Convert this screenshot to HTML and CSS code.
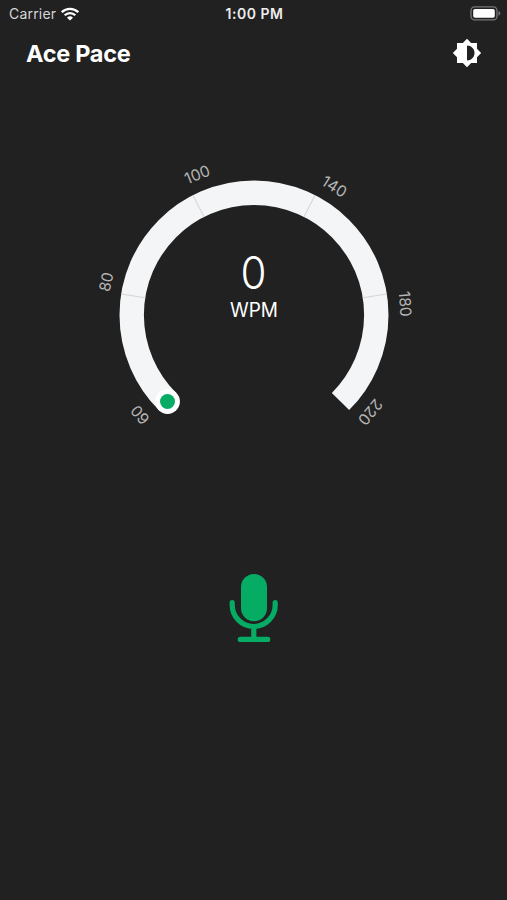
FILE: index.html
```html
<!DOCTYPE html>
<html lang="en">
<head>
<meta charset="utf-8">
<title>Ace Pace</title>
<link rel="stylesheet" href="styles.css">
</head>
<body>
<div class="screen">
  <div class="status">
    <div class="carrier"><span class="carrier-name">Carrier</span>
      <svg class="wifi" viewBox="0 0 18 14" width="18" height="14"><g fill="none" stroke="#fff" stroke-width="2.3"><path d="M.8 5.2a11.6 11.6 0 0 1 16.4 0"/><path d="M3.7 8.3a7.5 7.5 0 0 1 10.6 0"/></g><path fill="#fff" d="M9 13.6 6 10.7a4.3 4.3 0 0 1 6 0z"/></svg>
    </div>
    <div class="time">1:00 PM</div>
    <svg class="battery" viewBox="0 0 31 15" width="31" height="15"><rect x="1" y=".9" width="26" height="13" rx="3.6" fill="none" stroke="#77777a" stroke-width="1.3"/><rect x="3.2" y="3" width="21.6" height="8.8" rx="1.8" fill="#fff"/><path d="M28.5 5c2.4 1 2.4 3.8 0 4.8z" fill="#77777a"/></svg>
  </div>
  <header class="header">
    <h1 class="title">Ace Pace</h1>
    <svg class="theme" viewBox="0 0 24 24" width="30" height="30"><path fill="#fff" d="M20 15.31 23.31 12 20 8.69V4h-4.69L12 .69 8.69 4H4v4.69L.69 12 4 15.31V20h4.69L12 23.31 15.31 20H20z"/><path fill="#212121" d="M12 6v12c3.31 0 6-2.69 6-6s-2.69-6-6-6z"/></svg>
  </header>
  <main class="main">
    <svg class="gauge" viewBox="0 0 340 300" width="340" height="300">
      <g transform="translate(170 165)">
        <path d="M-86.5 86.5A122.3 122.3 0 1 1 86.5 86.5" fill="none" stroke="#f3f5f7" stroke-width="24.4"/>
        <g stroke="#d3d5d8" stroke-width="1">
          <path d="M0-134.5V-110" transform="rotate(-81)"/><path d="M0-134.5V-110" transform="rotate(-27)"/><path d="M0-134.5V-110" transform="rotate(27)"/><path d="M0-134.5V-110" transform="rotate(81)"/>
        </g>
        <circle cx="-86.5" cy="86.5" r="12.4" fill="#fff"/><circle cx="-86.5" cy="86.5" r="7.5" fill="#06ab64"/>
        <g class="ticks">
          <text y="-146" transform="rotate(-131.2)">60</text>
          <text y="-146" transform="rotate(-77.4)">80</text>
          <text y="-146" transform="rotate(-22)">100</text>
          <text y="-146" transform="rotate(32)">140</text>
          <text y="-146" transform="rotate(85.8)">180</text>
          <text y="-146" transform="rotate(129.8)">220</text>
        </g>
        <text class="value" x="-.5" y="-26" textLength="26" lengthAdjust="spacingAndGlyphs">0</text>
        <text class="unit" y="2" textLength="48" lengthAdjust="spacingAndGlyphs">WPM</text>
      </g>
    </svg>
    <svg class="mic" viewBox="0 0 50 70" width="50" height="70"><rect x="12" y="1" width="26" height="47.3" rx="13" fill="#06ab64"/><path d="M3.2 29.5v2.5a21.5 21.5 0 0 0 43 0v-2.5M24.8 54v11M11.3 66.4h27.4" fill="none" stroke="#06ab64" stroke-width="5.2" stroke-linecap="round"/></svg>
  </main>
</div>
</body>
</html>
```
FILE: styles.css
```css
* { box-sizing: border-box; margin: 0; }
body { background: #212121; color: #fff; font-family: Inter, "Liberation Sans", sans-serif; }
.screen { height: 900px; display: flex; flex-direction: column; overflow: hidden; }
.status { height: 28px; display: grid; grid-template-columns: 1fr auto 1fr; align-items: center; padding: 0 6px 1px 8px; }
.carrier { display: flex; align-items: center; gap: 5px; padding-left: 1px; font-size: 14px; color: #d6d6d6; }
.carrier-name { letter-spacing: .2px; }
.time { font-size: 14px; font-weight: 600; letter-spacing: .5px; color: #eee; }
.battery { justify-self: end; }
.header { height: 50px; display: flex; align-items: center; justify-content: space-between; padding: 0 25px 0 26px; }
.title { font-size: 23.5px; font-weight: 700; letter-spacing: -.3px; }
.main { display: flex; flex-direction: column; align-items: center; padding: 72px 0 0 1px; }
.gauge { display: block; }
.gauge text { text-anchor: middle; }
.ticks { font-size: 15.5px; fill: #b5b5b5; }
.value { font-size: 45px; font-weight: 300; fill: #fff; }
.unit { font-size: 19.5px; fill: #fff; }
.mic { margin-top: 123px; }
```
